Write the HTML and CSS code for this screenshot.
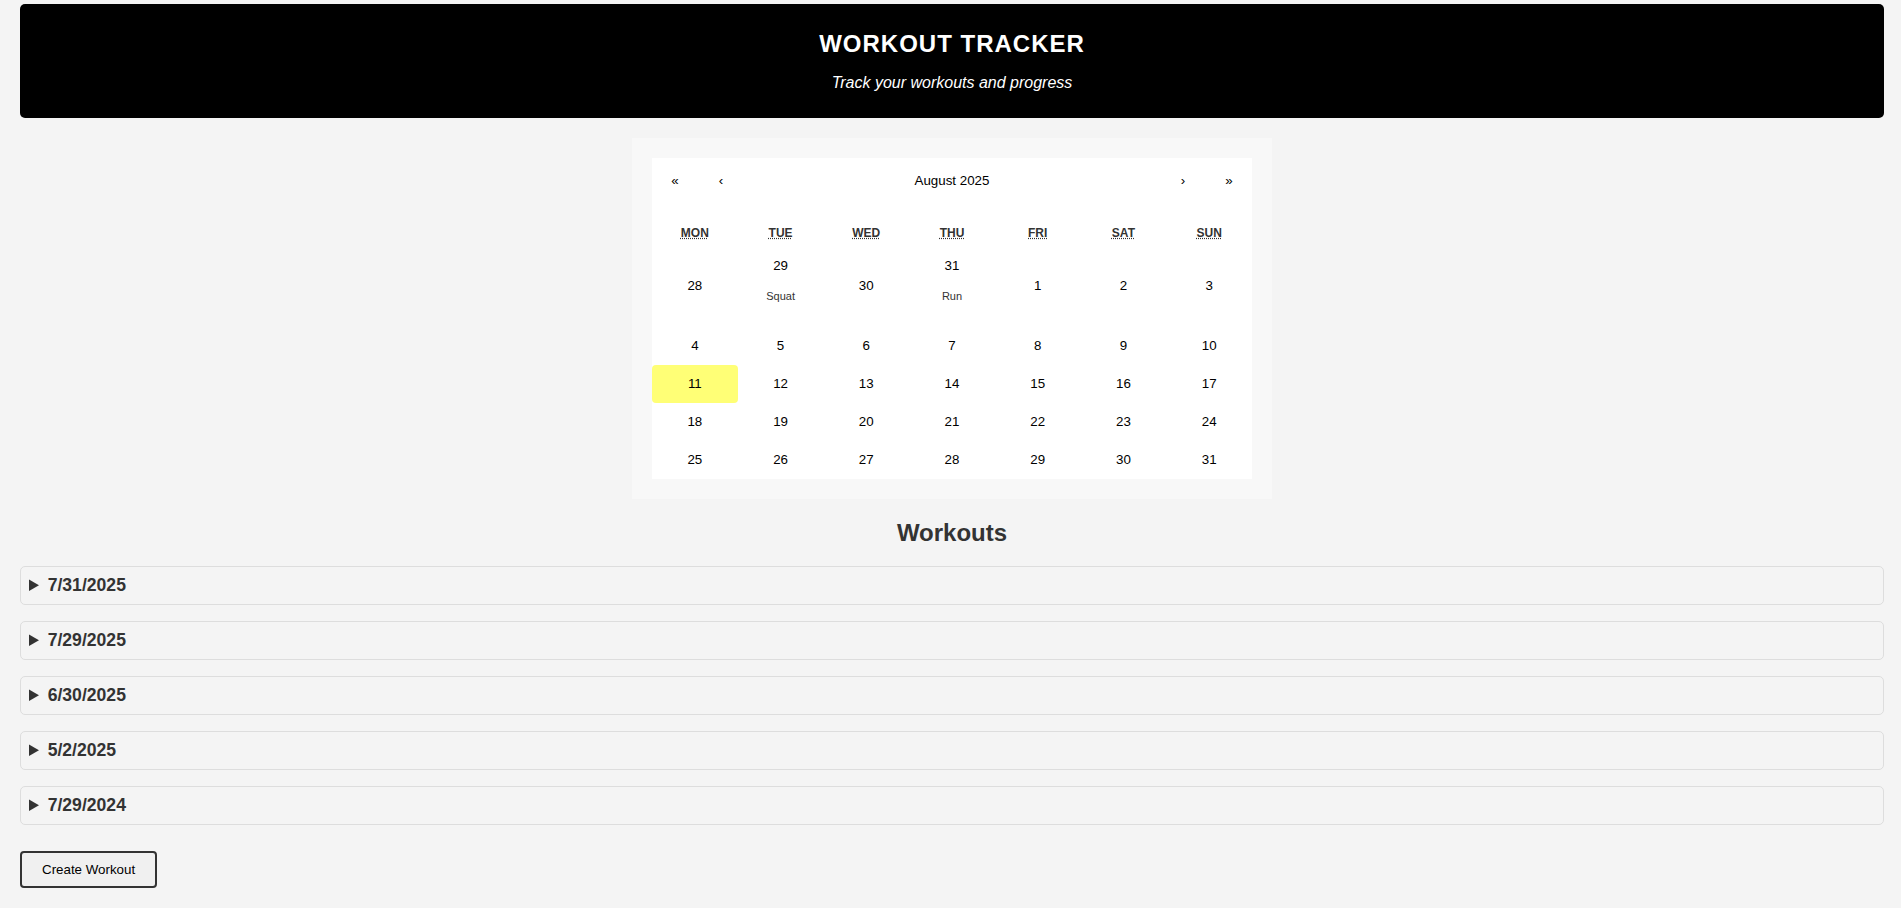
FILE: index.html
```html
<!DOCTYPE html>
<html lang="en">
<head>
<meta charset="utf-8">
<title>Workout Tracker</title>
<link rel="stylesheet" href="styles.css">
</head>
<body>
<div class="page">
  <header class="app-header">
    <h1 class="app-title">WORKOUT TRACKER</h1>
    <p class="app-subtitle">Track your workouts and progress</p>
  </header>

  <section class="calendar-wrap">
    <div class="calendar">
      <div class="cal-inner">
        <div class="cal-nav">
          <button class="cal-nav-btn">«</button>
          <button class="cal-nav-btn">‹</button>
          <button class="cal-nav-btn cal-label">August 2025</button>
          <button class="cal-nav-btn">›</button>
          <button class="cal-nav-btn">»</button>
        </div>
        <div class="cal-weekdays">
          <div class="cal-weekday"><abbr class="cal-abbr" title="Monday">Mon</abbr></div>
          <div class="cal-weekday"><abbr class="cal-abbr" title="Tuesday">Tue</abbr></div>
          <div class="cal-weekday"><abbr class="cal-abbr" title="Wednesday">Wed</abbr></div>
          <div class="cal-weekday"><abbr class="cal-abbr" title="Thursday">Thu</abbr></div>
          <div class="cal-weekday"><abbr class="cal-abbr" title="Friday">Fri</abbr></div>
          <div class="cal-weekday"><abbr class="cal-abbr" title="Saturday">Sat</abbr></div>
          <div class="cal-weekday"><abbr class="cal-abbr" title="Sunday">Sun</abbr></div>
        </div>
        <div class="cal-days">
          <button class="cal-tile"><span class="cal-num">28</span></button>
          <button class="cal-tile has-event"><span class="cal-num">29</span><span class="cal-event">Squat</span></button>
          <button class="cal-tile"><span class="cal-num">30</span></button>
          <button class="cal-tile has-event"><span class="cal-num">31</span><span class="cal-event">Run</span></button>
          <button class="cal-tile"><span class="cal-num">1</span></button>
          <button class="cal-tile"><span class="cal-num">2</span></button>
          <button class="cal-tile"><span class="cal-num">3</span></button>

          <button class="cal-tile"><span class="cal-num">4</span></button>
          <button class="cal-tile"><span class="cal-num">5</span></button>
          <button class="cal-tile"><span class="cal-num">6</span></button>
          <button class="cal-tile"><span class="cal-num">7</span></button>
          <button class="cal-tile"><span class="cal-num">8</span></button>
          <button class="cal-tile"><span class="cal-num">9</span></button>
          <button class="cal-tile"><span class="cal-num">10</span></button>

          <button class="cal-tile is-today"><span class="cal-num">11</span></button>
          <button class="cal-tile"><span class="cal-num">12</span></button>
          <button class="cal-tile"><span class="cal-num">13</span></button>
          <button class="cal-tile"><span class="cal-num">14</span></button>
          <button class="cal-tile"><span class="cal-num">15</span></button>
          <button class="cal-tile"><span class="cal-num">16</span></button>
          <button class="cal-tile"><span class="cal-num">17</span></button>

          <button class="cal-tile"><span class="cal-num">18</span></button>
          <button class="cal-tile"><span class="cal-num">19</span></button>
          <button class="cal-tile"><span class="cal-num">20</span></button>
          <button class="cal-tile"><span class="cal-num">21</span></button>
          <button class="cal-tile"><span class="cal-num">22</span></button>
          <button class="cal-tile"><span class="cal-num">23</span></button>
          <button class="cal-tile"><span class="cal-num">24</span></button>

          <button class="cal-tile"><span class="cal-num">25</span></button>
          <button class="cal-tile"><span class="cal-num">26</span></button>
          <button class="cal-tile"><span class="cal-num">27</span></button>
          <button class="cal-tile"><span class="cal-num">28</span></button>
          <button class="cal-tile"><span class="cal-num">29</span></button>
          <button class="cal-tile"><span class="cal-num">30</span></button>
          <button class="cal-tile"><span class="cal-num">31</span></button>
        </div>
      </div>
    </div>
  </section>

  <h2 class="section-title">Workouts</h2>

  <div class="workout-list">
    <details class="workout"><summary class="workout-summary">7/31/2025</summary></details>
    <details class="workout"><summary class="workout-summary">7/29/2025</summary></details>
    <details class="workout"><summary class="workout-summary">6/30/2025</summary></details>
    <details class="workout"><summary class="workout-summary">5/2/2025</summary></details>
    <details class="workout"><summary class="workout-summary">7/29/2024</summary></details>
  </div>

  <button class="create-btn">Create Workout</button>
</div>
</body>
</html>
```

FILE: styles.css
```css
* {
  box-sizing: border-box;
}

html, body {
  margin: 0;
  padding: 0;
  background: #f4f4f4;
}

body {
  font-family: "Liberation Sans", Arial, Helvetica, sans-serif;
  color: #333;
}

.page {
  padding: 4px 17px 0 20px;
}

/* Header */
.app-header {
  background: #000;
  border-radius: 5px;
  padding: 26px 20px 26px;
  text-align: center;
  margin-bottom: 20px;
}

.app-title {
  margin: 0 0 16px;
  font-size: 24px;
  line-height: 28px;
  font-weight: bold;
  letter-spacing: 1px;
  color: #fff;
}

.app-subtitle {
  margin: 0;
  font-size: 16px;
  line-height: 18px;
  font-style: italic;
  color: #fff;
}

/* Calendar */
.calendar-wrap {
  display: flex;
  justify-content: center;
}

.calendar {
  width: 640px;
  padding: 20px;
  background: #f8f8f8;
}

.cal-inner {
  background: #fff;
}

.cal-nav {
  display: flex;
  height: 44px;
  margin-bottom: 16px;
}

.cal-nav-btn {
  min-width: 46px;
  margin: 0;
  padding: 0;
  border: 0;
  background: none;
  font-family: "Liberation Sans", Arial, Helvetica, sans-serif;
  font-size: 13.333px;
  color: #000;
}

.cal-label {
  flex-grow: 1;
}

.cal-weekdays,
.cal-days {
  display: grid;
  grid-template-columns: repeat(7, 1fr);
}

.cal-weekday {
  padding: 8px 6px 4px;
  text-align: center;
  text-transform: uppercase;
  font-weight: bold;
  font-size: 12px;
  line-height: 15px;
  color: #333;
}

.cal-abbr {
  text-decoration: underline dotted;
}

.cal-tile {
  display: flex;
  flex-direction: column;
  justify-content: center;
  align-items: center;
  margin: 0;
  border: 0;
  padding: 10px 6.6667px;
  background: none;
  font-family: "Liberation Sans", Arial, Helvetica, sans-serif;
  font-size: 13.333px;
  line-height: 18px;
  color: #000;
}

.cal-num {
  display: block;
}

.has-event .cal-num {
  padding-top: 2px;
}

.cal-event {
  display: block;
  margin: 12px 0;
  font-size: 11px;
  line-height: 18px;
  color: #333;
}

.is-today {
  background: #ffff76;
  border-radius: 4px;
}

/* Workouts */
.section-title {
  margin: 19.92px 0 19px;
  text-align: center;
  font-size: 24px;
  font-weight: bold;
  color: #333;
}

.workout {
  border: 1px solid #ddd;
  border-radius: 5px;
  margin-bottom: 16px;
  background: #f4f4f4;
}

.workout-summary {
  padding: 8px;
  font-size: 17.6px;
  line-height: 21px;
  font-weight: bold;
  color: #333;
  cursor: pointer;
}

.create-btn {
  margin-top: 10px;
  padding: 9px 20px;
  border: 2px solid #333;
  border-radius: 4px;
  background: #f0f0f0;
  font-family: "Liberation Sans", Arial, Helvetica, sans-serif;
  font-size: 13.333px;
  color: #000;
  cursor: pointer;
}
```
